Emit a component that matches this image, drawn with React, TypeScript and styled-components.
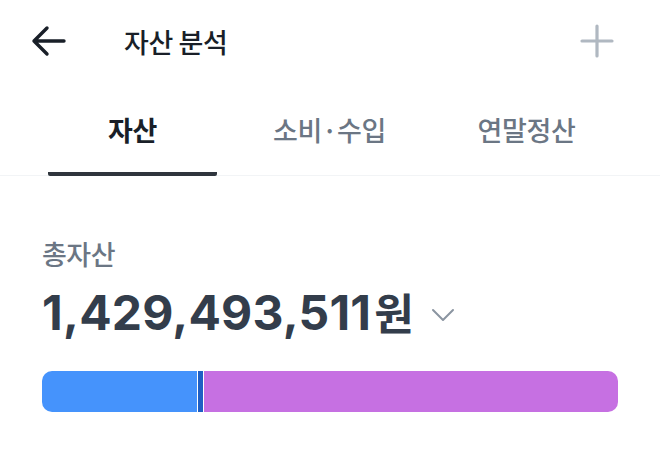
import React from "react";
import styled, { createGlobalStyle } from "styled-components";

const GlobalStyle = createGlobalStyle`
  html, body {
    margin: 0;
    padding: 0;
    background: #ffffff;
  }
  body {
    font-family: "Noto Sans CJK KR", "Noto Sans", sans-serif;
    -webkit-font-smoothing: antialiased;
  }
`;

const Page = styled.div`
  width: 660px;
  height: 450px;
  overflow: hidden;
  background: #fff;
`;

const Header = styled.header`
  display: flex;
  align-items: center;
  height: 82px;
  padding: 0 46px 0 31px;
`;

const IconButton = styled.button`
  display: flex;
  align-items: center;
  justify-content: center;
  padding: 0;
  border: 0;
  background: none;
  cursor: pointer;
`;

const Title = styled.h1`
  margin: 0 0 0 57px;
  flex: 1;
  font-size: 27px;
  font-weight: 500;
  color: #191f28;
  letter-spacing: -0.4px;
`;

const Tabs = styled.nav`
  display: grid;
  grid-template-columns: repeat(3, 1fr);
  padding: 0 35px 0 34px;
  border-bottom: 1px solid #f2f4f6;
`;

const Tab = styled.div<{ $active?: boolean }>`
  display: flex;
  align-items: center;
  justify-content: center;
  height: 94px;
  margin: 0 14px -1px;
  padding-top: 4px;
  box-sizing: border-box;
  border-bottom: 4px solid ${({ $active }) => ($active ? "#2f353d" : "transparent")};
  border-radius: 0 0 2px 2px;
  font-size: 27px;
  font-weight: ${({ $active }) => ($active ? 700 : 500)};
  color: ${({ $active }) => ($active ? "#191f28" : "#6b7684")};
  letter-spacing: -0.4px;
`;

const Summary = styled.section`
  padding: 60px 42px 0;
`;

const Label = styled.div`
  font-size: 27px;
  font-weight: 500;
  color: #6b7684;
  line-height: 36px;
  letter-spacing: -0.5px;
`;

const AmountRow = styled.div`
  display: flex;
  align-items: center;
  margin-top: 9px;
  gap: 17px;
`;

const Amount = styled.div`
  font-family: "Inter", "Noto Sans CJK KR", sans-serif;
  font-size: 48px;
  font-weight: 700;
  color: #333d4b;
  line-height: 60px;
  letter-spacing: 0.2px;

  span {
    font-family: "Noto Sans CJK KR", sans-serif;
    font-size: 43px;
    margin-left: 3px;
  }
`;

const Chevron = styled.svg`
  margin-top: 6px;
`;

const Bar = styled.div`
  display: flex;
  gap: 1px;
  height: 41px;
  margin-top: 28px;
  border-radius: 10px;
  overflow: hidden;
  background: #fff;
`;

const Segment = styled.div<{ $color: string }>`
  background: ${({ $color }) => $color};
  flex-shrink: 0;
`;

const segments = [
  { color: "#4593fc", width: 155 },
  { color: "#1f5fc4", width: 5 },
  { color: "#c670e2", width: 0 },
];

export default function App() {
  return (
    <Page>
      <GlobalStyle />
      <Header>
        <IconButton aria-label="뒤로">
          <svg width="36" height="32" viewBox="0 0 36 32" fill="none">
            <path
              d="M3 16H33M3 16L16 3M3 16L16 29"
              stroke="#191f28"
              strokeWidth="3.4"
              strokeLinecap="round"
              strokeLinejoin="round"
            />
          </svg>
        </IconButton>
        <Title>자산 분석</Title>
        <IconButton aria-label="추가">
          <svg width="34" height="34" viewBox="0 0 34 34" fill="none">
            <path
              d="M17 2V32M2 17H32"
              stroke="#b0b8c1"
              strokeWidth="3.2"
              strokeLinecap="round"
            />
          </svg>
        </IconButton>
      </Header>
      <Tabs>
        <Tab $active>자산</Tab>
        <Tab>소비·수입</Tab>
        <Tab>연말정산</Tab>
      </Tabs>
      <Summary>
        <Label>총자산</Label>
        <AmountRow>
          <Amount>
            1,429,493,511<span>원</span>
          </Amount>
          <Chevron width="24" height="14" viewBox="0 0 24 14" fill="none">
            <path
              d="M2 2L12 12L22 2"
              stroke="#8b95a1"
              strokeWidth="2"
              strokeLinecap="round"
              strokeLinejoin="round"
            />
          </Chevron>
        </AmountRow>
        <Bar>
          {segments.map((s, i) => (
            <Segment
              key={i}
              $color={s.color}
              style={s.width ? { width: s.width } : { flex: 1 }}
            />
          ))}
        </Bar>
      </Summary>
    </Page>
  );
}
